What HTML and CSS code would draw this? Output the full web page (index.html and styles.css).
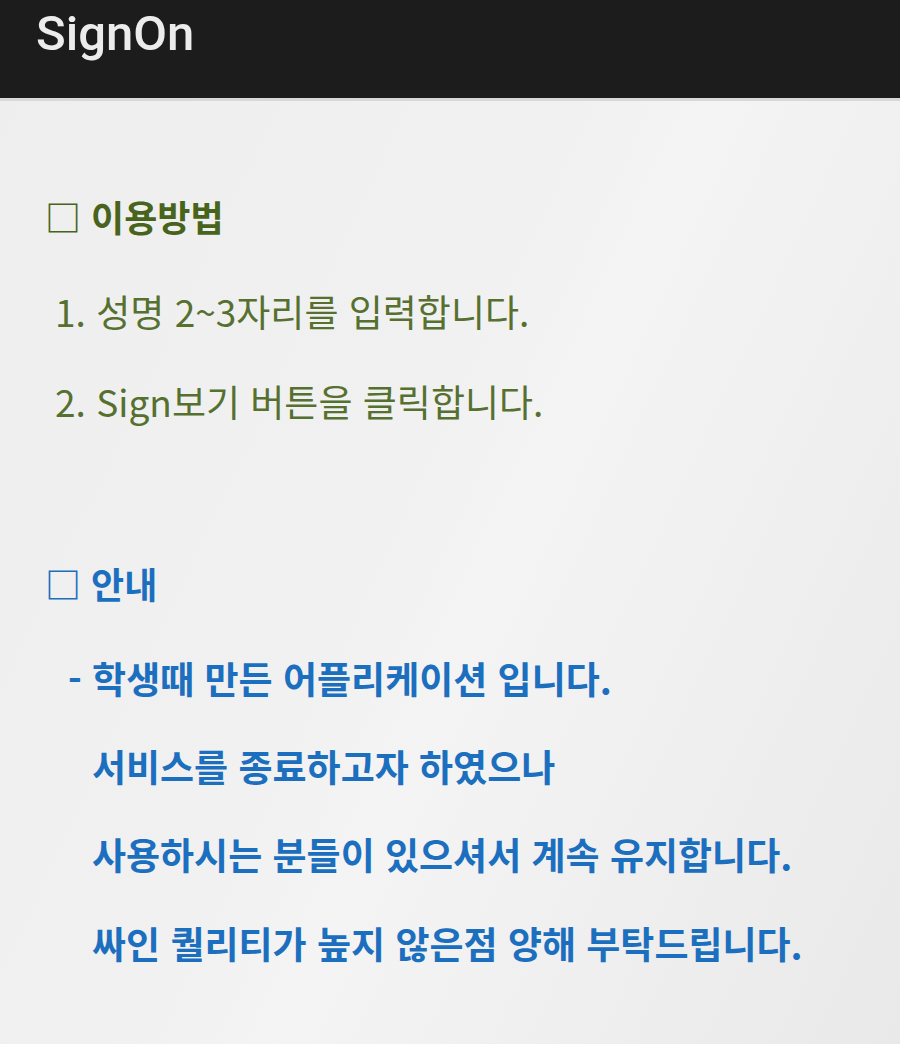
FILE: index.html
```html
<!DOCTYPE html>
<html lang="ko">
<head>
<meta charset="utf-8">
<link rel="stylesheet" href="styles.css">
</head>
<body>
<header class="appbar"><h1 class="title">SignOn</h1></header>
<main class="content">
  <section class="block usage">
    <h2 class="heading">□ 이용방법</h2>
    <p class="item">1. 성명 2~3자리를 입력합니다.</p>
    <p class="item">2. Sign보기 버튼을 클릭합니다.</p>
  </section>
  <section class="block notice">
    <h2 class="heading">□ 안내</h2>
    <p class="line">- 학생때 만든 어플리케이션 입니다.</p>
    <p class="line indent">서비스를 종료하고자 하였으나</p>
    <p class="line indent">사용하시는 분들이 있으셔서 계속 유지합니다.</p>
    <p class="line indent">싸인 퀄리티가 높지 않은점 양해 부탁드립니다.</p>
  </section>
</main>
</body>
</html>
```
FILE: styles.css
```css
html, body {
  margin: 0;
  padding: 0;
  height: 100%;
}
body {
  font-family: "Noto Sans CJK KR", "Noto Sans", sans-serif;
  background: linear-gradient(115deg, #eeeeee 0%, #f1f1f1 45%, #f4f4f4 55%, #e9e9e9 100%);
  min-height: 1044px;
}
.appbar {
  height: 101px;
  background: #1c1c1c;
  border-bottom: 3px solid #d8d8d8;
  box-sizing: border-box;
  display: flex;
  align-items: flex-start;
}
.title {
  margin: 4px 0 0 36px;
  font-family: Roboto, "Noto Sans", sans-serif;
  font-weight: 500;
  font-size: 49px;
  line-height: 60px;
  color: #ececec;
}
.block {
  display: flex;
  flex-direction: column;
}
.heading {
  margin: 0;
  font-size: 36px;
  font-weight: 700;
  line-height: 48px;
  padding-left: 45px;
}
.usage {
  padding-top: 91px;
}
.usage .heading { color: #48641c; }
.item {
  margin: 0;
  font-size: 37px;
  font-weight: 400;
  line-height: 48px;
  padding-left: 55px;
  margin-top: 42px;
  color: #567030;
}
.usage .item:first-of-type { margin-top: 47px; }
.notice {
  padding-top: 134px;
  color: #1b6fbe;
}
.line {
  margin: 0;
  font-size: 37px;
  font-weight: 700;
  line-height: 48px;
  padding-left: 68px;
  margin-top: 40px;
}
.notice .line:first-of-type { margin-top: 47px; }
.notice .line:last-of-type { margin-top: 41px; }
.line.indent { padding-left: 92px; }
```
